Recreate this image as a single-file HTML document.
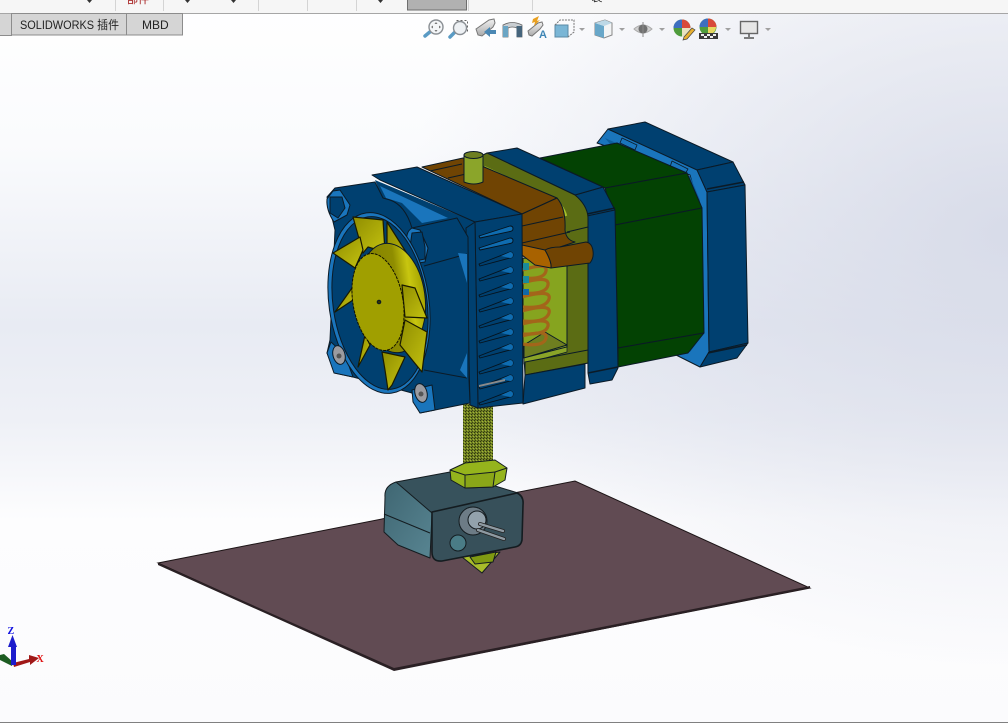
<!DOCTYPE html>
<html><head><meta charset="utf-8"><style>
html,body{margin:0;padding:0;width:1008px;height:723px;overflow:hidden;background:#fff}
svg{position:absolute;left:0;top:0}
</style></head><body>
<svg width="1008" height="723" viewBox="0 0 1008 723" xmlns="http://www.w3.org/2000/svg">
<defs>
<linearGradient id="bgv" x1="0" y1="0" x2="0" y2="1"><stop offset="0" stop-color="#fff"/><stop offset=".2" stop-color="#fafbfd"/><stop offset=".45" stop-color="#e8ebf3"/><stop offset=".58" stop-color="#eef0f6"/><stop offset=".72" stop-color="#fdfdfe"/><stop offset="1" stop-color="#fbfbfd"/></linearGradient>
<radialGradient id="bgr" cx="1" cy=".32" r=".6"><stop offset="0" stop-color="#d5d9e7" stop-opacity=".9"/><stop offset="1" stop-color="#d5d9e7" stop-opacity="0"/></radialGradient>
<linearGradient id="hub" x1="0" y1="0" x2="1" y2="0"><stop offset="0" stop-color="#7f7d00"/><stop offset=".6" stop-color="#8f8d00"/><stop offset=".8" stop-color="#c8c610"/><stop offset="1" stop-color="#a5a300"/></linearGradient>
<linearGradient id="bld" x1="0" y1="0" x2="1" y2="1"><stop offset="0" stop-color="#8f8d00"/><stop offset="1" stop-color="#c4c210"/></linearGradient>
<linearGradient id="side" x1="0" y1="0" x2="1" y2="1"><stop offset="0" stop-color="#3f6672"/><stop offset="1" stop-color="#588592"/></linearGradient>
<linearGradient id="scope" x1="0" y1="0" x2="0" y2="1"><stop offset="0" stop-color="#f2f2f2"/><stop offset="1" stop-color="#aaa"/></linearGradient>
<pattern id="thr" width="3" height="3" patternUnits="userSpaceOnUse"><rect width="3" height="3" fill="#6f7f22"/><rect x="0" y="0" width="1" height="1" fill="#2c3410"/><rect x="2" y="1" width="1" height="1" fill="#a2b43a"/><rect x="1" y="2" width="1" height="1" fill="#3a4414"/></pattern>
</defs>
<rect width="1008" height="723" fill="url(#bgv)"/>
<rect width="1008" height="723" fill="url(#bgr)"/>

<!-- toolbar -->
<rect width="1008" height="13" fill="#f6f6f6"/>
<rect y="13" width="1008" height="1" fill="#a6a6a6"/>
<g fill="#d4d4d4"><rect x="115" width="1" height="11"/><rect x="163" width="1" height="11"/><rect x="258" width="1" height="11"/><rect x="307" width="1" height="11"/><rect x="356" width="1" height="11"/><rect x="468" width="1" height="11"/><rect x="532" width="1" height="11"/></g>
<rect x="407.500" y="-2" width="59" height="12" fill="#b1b1b1" stroke="#6f6f6f"/>
<g fill="#333"><path d="M87 0h5l-2.500 3z"/><path d="M185 0h5l-2.500 3z"/><path d="M231 0h5l-2.500 3z"/><path d="M378 0h5l-2.500 3z"/></g>
<text x="127" y="3" font-family="'Liberation Sans','Noto Sans CJK SC',sans-serif" font-size="11" fill="#a01010">部件</text>
<text x="597" y="1" font-family="'Liberation Sans','Noto Sans CJK SC',sans-serif" font-size="11" fill="#222" text-anchor="middle">装</text>

<!-- tabs -->
<rect x="0" y="14" width="11" height="21" fill="#d5d5d5"/>
<rect x="11.500" y="13.500" width="115" height="21.500" fill="#d5d5d5" stroke="#8c8c8c"/>
<rect x="126.500" y="13.500" width="56" height="21.500" fill="#d5d5d5" stroke="#8c8c8c"/>
<rect x="0" y="35" width="12" height="1" fill="#8c8c8c"/>
<text x="20" y="29" textLength="99" lengthAdjust="spacingAndGlyphs" font-family="'Liberation Sans','Noto Sans CJK SC',sans-serif" font-size="12" fill="#222">SOLIDWORKS 插件</text>
<text x="142" y="29" font-family="'Liberation Sans',sans-serif" font-size="12" fill="#222">MBD</text>

<!-- heads-up icons -->
<g>
<path d="M425 36l6-5" stroke="#5a9bc4" stroke-width="3.500" stroke-linecap="round"/><circle cx="436" cy="27" r="7" fill="#f4f6f8" stroke="#8a8f94" stroke-width="1.400"/><path d="M436 22l1.500 2h-3zM436 32l1.500-2h-3zM431 27l2-1.500v3zM441 27l-2-1.500v3z" fill="#777"/>
<path d="M450 37l6-6" stroke="#5a9bc4" stroke-width="3.500" stroke-linecap="round"/><rect x="456.500" y="20.500" width="11" height="11" fill="none" stroke="#666" stroke-dasharray="2 2"/><circle cx="460" cy="28" r="6.500" fill="#eef1f4" stroke="#8a8f94" stroke-width="1.400"/>
<path d="M476 29l13-9 5-1 1 4-2 4-11 9-4-1z" fill="url(#scope)" stroke="#777"/><path d="M484 32l6-5v3h6v4h-6v3z" fill="#4b88b4"/>
<path d="M503 25q9-5 19 0v12h-5v-9q-5-2-9 0v9h-5z" fill="#c9ced2" stroke="#666" stroke-width=".8"/><path d="M503 26h5v11h-5z" fill="#6aa5c4"/><path d="M516.500 26h5.500v11h-5.500z" fill="#46657c"/>
<path d="M528 31l10-8 4-1 1 3-3 4-8 7-3-1z" fill="url(#scope)" stroke="#777"/><path d="M533 19l6-3-2 5 3-1-6 6 1-4-3 1z" fill="#e9a020"/><text x="539" y="38" font-family="'Liberation Sans',sans-serif" font-weight="bold" font-size="11" fill="#3f86b5">A</text>
<path d="M555 25h13v12h-13z" fill="#7ab6d6" stroke="#5a8ba6"/><path d="M555 25l5-5h14v12l-6 5" fill="none" stroke="#777" stroke-dasharray="2 1"/>
<path d="M579 28h6l-3 3z" fill="#a0a0a0"/>
<path d="M595 23l10-3 7 3v12l-8 3-9-3z" fill="#f2f4f5" stroke="#888"/><path d="M595 23l9 3v12l-9-3z" fill="#68a7c9"/><path d="M595 23l10-3 7 3-8 3z" fill="#bcd8e6"/>
<path d="M619 28h6l-3 3z" fill="#a0a0a0"/>
<path d="M634 29q9-8 18 0q-9 8-18 0z" fill="#d0d0d0" stroke="#aaa"/><circle cx="643" cy="29" r="4.500" fill="#707070"/><path d="M643 22v15" stroke="#8a8a8a"/>
<path d="M659 28h6l-3 3z" fill="#a0a0a0"/>
<circle cx="682" cy="28" r="8.500" fill="#4f9c3c"/><path d="M682 19.500a8.500 8.500 0 0 1 8.500 8.500h-8.500z" fill="#d84a3a"/><path d="M673.500 28a8.500 8.500 0 0 1 8.500-8.500v8.500z" fill="#3d6fc0"/><path d="M682 28h8.500a8.500 8.500 0 0 1-8.500 8.500z" fill="#e8e2c0"/><path d="M684 37l8-9 3 2-8 9-4 1z" fill="#e8b030" stroke="#444" stroke-width=".7"/>
<circle cx="708" cy="27" r="8.500" fill="#4f9c3c"/><path d="M708 18.500a8.500 8.500 0 0 1 8.500 8.500h-8.500z" fill="#d84a3a"/><path d="M699.500 27a8.500 8.500 0 0 1 8.500-8.500v8.500z" fill="#3d6fc0"/><path d="M708 27h8a8 8 0 0 1-3 6h-5z" fill="#e8d860"/><rect x="699" y="33" width="19" height="6" fill="#3a3a3a"/><path d="M701 34h3v2h-3zM707 34h3v2h-3zM713 34h3v2h-3zM704 36h3v2h-3zM710 36h3v2h-3z" fill="#eee"/>
<path d="M725 28h6l-3 3z" fill="#a0a0a0"/>
<rect x="740.500" y="21.500" width="17" height="12" fill="#e6e6e6" stroke="#666" stroke-width="1.400"/><path d="M749 34v3M744 38h10" stroke="#555" stroke-width="1.500"/>
<path d="M765 28h6l-3 3z" fill="#a0a0a0"/>
</g>

<!-- plate -->
<path d="M158 563L575 481L810 588L394 670Z" fill="#614b53" stroke="#1c1416" stroke-width="1"/>
<path d="M158 563L394 668L810 586L810 588L394 671L158 565Z" fill="#2a2024"/>

<!-- rod -->
<rect x="463" y="404" width="30" height="66" fill="url(#thr)"/>

<g stroke="#0b1a26" stroke-width="1" stroke-linejoin="round">
<!-- rear cap rim -->
<path d="M597 143L608 129L697 169L707 192L709 352L700 367L676 355L690 340L700 210L690 175Z" fill="#1a75bc"/>
<path d="M605 138L690 176L700 200L699 340L690 352L660 345L640 180Z" fill="#0d5f9e" stroke="none"/>
<path d="M622 138L637 145L635 150L620 143ZM672 161L688 169L685 174L670 167Z" fill="#1a75bc" stroke-width=".8"/>
<!-- rear cap faces -->
<path d="M608 129L645 122L733 162L697 170Z" fill="#004070"/>
<path d="M697 170L733 162L745 185L707 192Z" fill="#004070"/>
<path d="M707 192L745 185L748 343L709 352Z" fill="#004070"/>
<path d="M709 352L748 343L737 358L700 367Z" fill="#004070"/>
<path d="M707 189L744 182M708 353L747 345" stroke-width="1.500" fill="none"/>
<!-- motor -->
<path d="M540 158L617 143L687 173L605 188Z" fill="#034203"/>
<path d="M605 188L687 173L702 208L615 225Z" fill="#034203"/>
<path d="M615 225L702 208L704 333L618 348Z" fill="#034203"/>
<path d="M618 348L704 333L688 353L618 367Z" fill="#034203"/>
<!-- mount blue -->
<path d="M575 195L603 187L615 210L588 216Z" fill="#004070"/>
<path d="M487 153L517 148L603 187L575 195Z" fill="#004070"/>
<path d="M587 216L615 210L618 368L612 380L590 384L588 373Z" fill="#004070"/>
<path d="M587 214L615 208M588 373L618 367" fill="none" stroke-width="1.500"/>
<!-- olive frame -->
<path d="M483 155L487 153L575 195Q587 205 588 217L588 363L525 375L523 340L567 340L567 262L550 268L553 205L483 173Z" fill="#5b6c14"/>
<path d="M484 167L553 199Q563 205 566 216" fill="none" stroke="#a6c22a" stroke-width="2.500"/>
<path d="M567 232L588 227" fill="none"/>
<!-- window -->
<path d="M523 258L567 262L567 347L523 358Z" fill="#86a41f"/>
<path d="M524 345L545 332L567 345L524 358Z" fill="#6e7e20"/>
<path d="M524 358L567 347V352L524 364Z" fill="#8aa428" stroke-width=".7"/>
<path d="M525 362L588 350L588 363L525 375Z" fill="#5b6c14"/>
<path d="M525 375L585 364L585 388L523 404Z" fill="#004070"/>
<!-- spring -->
<g fill="none" stroke="#a3651a" stroke-width="3.200">
<path d="M522 270q26-8 24 1t-24 7"/><path d="M522 283q28-8 26 2t-26 8"/><path d="M522 297q30-8 27 2t-27 8"/><path d="M522 311q30-8 27 2t-27 8"/><path d="M522 324q28-7 26 2t-26 8"/><path d="M522 336q26-7 24 2t-24 6"/>
</g>
<rect x="523" y="263" width="6" height="7" fill="#1a8a9a" stroke="none"/><rect x="523" y="276" width="6" height="7" fill="#1a8a9a" stroke="none"/><rect x="523" y="289" width="6" height="6" fill="#1068a8" stroke="none"/>
<!-- brown bracket -->
<path d="M422 167L463 158L557 198L522 214Z" fill="#704403"/>
<path d="M430 171L462 164M448 178L466 174" fill="none"/>
<path d="M522 214L557 198Q566 208 565 230Q566 240 575 242L560 247Q548 250 548 262L522 256Z" fill="#704403"/>
<path d="M522 226L563 217M522 243L570 232" fill="none"/>
<path d="M522 245L545 250Q552 262 551 268L535 265L522 255Z" fill="#a86200"/>
<path d="M545 250Q552 262 551 268L590 263Q594 258 593 251Q592 243 586 242L560 247Q550 247 545 250Z" fill="#704403"/>
<!-- post -->
<path d="M464 155h19v27q-9 4-19 0z" fill="#8ba52a"/>
<ellipse cx="473.500" cy="155" rx="9.500" ry="3.500" fill="#6d7f22"/>
<!-- fill behind housing top -->
<path d="M375 180L475 222L470 240L412 240L385 205Z" fill="#004070" stroke="none"/>
<!-- heat sink top -->
<path d="M372 175L417 167L522 214L475 222L380 180Z" fill="#004070"/>
<path d="M380 186L386 198L402 203L422 223L448 218Z" fill="#1a75bc" stroke="none"/>
<!-- heat sink front -->
<path d="M475 222L522 214L523 403L478 408Z" fill="#004070"/>
<path d="M466 228L475 222L478 408L470 405Z" fill="#004070"/>
<g fill="#004070" stroke="#05121c" stroke-width=".9">
<path d="M479 236L510 226q3 0 3 2.500t-3 3L480 238Z" fill="#0f6cb0"/>
<path d="M479 248L510 238q3 0 3 2.500t-3 3L480 250Z" fill="#0f6cb0"/>
<path d="M479 264L510 252q3 0 3 3t-3 3L480 266Z"/>
<path d="M479 279L510 267q3 0 3 3t-3 3L480 281Z"/>
<path d="M479 295L510 283q3 0 3 3t-3 3L480 297Z"/>
<path d="M479 310L510 298q3 0 3 3t-3 3L480 312Z"/>
<path d="M479 326L510 314q3 0 3 3t-3 3L480 328Z"/>
<path d="M479 341L510 329q3 0 3 3t-3 3L480 343Z"/>
<path d="M479 356L510 344q3 0 3 3t-3 3L480 358Z"/>
<path d="M479 372L510 360q3 0 3 3t-3 3L480 374Z"/>
<path d="M479 387L510 375q3 0 3 3t-3 3L480 389Z"/>
<path d="M479 403L510 391q3 0 3 3t-3 3L480 405Z"/>
</g>
<g fill="#0f6cb0" stroke="none">
<path d="M501 256l9-4q3 0 3 3t-3 3z"/><path d="M501 271l9-4q3 0 3 3t-3 3z"/><path d="M501 287l9-4q3 0 3 3t-3 3z"/><path d="M501 302l9-4q3 0 3 3t-3 3z"/><path d="M501 318l9-4q3 0 3 3t-3 3z"/><path d="M501 333l9-4q3 0 3 3t-3 3z"/><path d="M501 348l9-4q3 0 3 3t-3 3z"/><path d="M501 364l9-4q3 0 3 3t-3 3z"/><path d="M501 379l9-4q3 0 3 3t-3 3z"/><path d="M501 395l9-4q3 0 3 3t-3 3z"/>
</g>
<path d="M479 385L505 379v2L479 387Z" fill="#8a8a8a" stroke="none"/>
<!-- fan housing -->
<path d="M327 197L335 188L375 182L383 198L390 200Q405 205 412 228L457 218L468 237L469 380L470 403L420 413L412 393L353 377L335 373L327 353L330 340L335 230Z" fill="#004070"/>
<path d="M424 266L467 254M424 370L467 378" fill="none"/>
<path d="M458 253L467 283L467 353L460 370L467 378L467 254Z" fill="#1a75bc" stroke="none"/>
<!-- lobes -->
<path d="M333 191L327 199Q326 210 334 222L347 215L350 205L340 190Z" fill="#1a75bc"/>
<path d="M330 197L342 197L345 208L338 218L330 213Z" fill="#004070"/>
<path d="M412 228Q405 232 407 245L412 264L425 262L428 248L420 230Z" fill="#1a75bc"/>
<path d="M412 233L422 232L425 247L425 259L415 261L410 247Z" fill="#004070"/>
<path d="M331 342L327 353L334 373L353 377L345 355Z" fill="#1a75bc"/>
<path d="M412 390L413 402L420 413L435 410L432 385Z" fill="#1a75bc"/>
<!-- fan ring -->
<ellipse cx="379" cy="303" rx="50" ry="91" transform="rotate(-8 379 303)" fill="#1a75bc"/>
<ellipse cx="380" cy="303" rx="47" ry="87" transform="rotate(-8 380 303)" fill="#004070"/>
<!-- blades -->
<g fill="url(#bld)" stroke="#1a1a00" stroke-width="1.200">
<path d="M353 217L383 220L385 252L368 247L363 253Z"/>
<path d="M387 222L413 263L400 285L395 255L387 255Z"/>
<path d="M333 253L360 237L363 250L355 268Z"/>
<path d="M335 312L352 288L353 300Z"/>
<path d="M358 367L365 335L370 345Z"/>
</g>
<!-- hub body -->
<ellipse cx="392" cy="298" rx="33" ry="55" transform="rotate(-8 392 298)" fill="url(#hub)"/>
<g fill="url(#bld)" stroke="#1a1a00" stroke-width="1.200">
<path d="M402 285L415 288L427 318L405 317Z"/>
<path d="M405 320L427 332L422 372L400 345Z"/>
<path d="M382 352L405 357L392 385L388 390L385 370Z"/>
</g>
<ellipse cx="378" cy="302" rx="25" ry="49" transform="rotate(-10 378 302)" fill="#a09f00" stroke-dasharray="3 1" stroke="#101000"/>
<circle cx="379" cy="302" r="1.800" fill="#333300"/>
<!-- bolts -->
<g fill="#9b9ba0"><ellipse cx="339" cy="355" rx="6" ry="9.500" transform="rotate(-15 339 355)"/><ellipse cx="421" cy="393" rx="6" ry="9.500" transform="rotate(-15 421 393)"/></g>
<circle cx="339" cy="356" r="2.500" fill="#555" stroke="none"/><circle cx="421" cy="394" r="2.500" fill="#555" stroke="none"/>
</g>

<!-- hot end -->
<g stroke="#141c20" stroke-width="1" stroke-linejoin="round">
<path d="M462 557L500 552L482 573Z" fill="#a8bc2a"/>
<path d="M470 557L496 552L493 562L475 564Z" fill="#7f9a12"/>
<path d="M396 482L450 472L518 493L430 514L392 498Z" fill="#37525c"/>
<path d="M385 497Q384 486 396 482L432 513L430 558L398 545L384 532Z" fill="url(#side)"/>
<path d="M384 514L430 533" fill="none"/>
<path d="M432 512L517 493Q524 496 523 505L522 540Q521 546 515 547L442 561Q432 562 432 552Z" fill="#37505a" stroke-width="1.600"/>
<path d="M450 470L465 463L495 460L507 468L505 480L493 487L465 488L451 480Z" fill="#95b41c"/>
<path d="M465 475L495 472L493 487L465 488Z" fill="#8aa618"/>
<path d="M450 470L465 475M495 472L507 468" fill="none"/>
<circle cx="473" cy="521" r="14" fill="#6d7c86"/>
<circle cx="477" cy="520" r="9" fill="#93a2ac"/>
<circle cx="458" cy="543" r="8" fill="#4a7c86"/>
<path d="M480 524L503 531" stroke="#222" stroke-width="4" stroke-linecap="round" fill="none"/>
<path d="M480 524L503 531" stroke="#8e9aa2" stroke-width="2.400" stroke-linecap="round" fill="none"/>
<path d="M478 530L504 539" stroke="#222" stroke-width="4" stroke-linecap="round" fill="none"/>
<path d="M478 530L504 539" stroke="#8e9aa2" stroke-width="2.400" stroke-linecap="round" fill="none"/>
</g>

<!-- triad -->
<path d="M0 655l4-1 9 8-1 4-12-6z" fill="#1d5c22"/>
<path d="M13 663L29 659V655L39 658L30 665V662L14 667Z" fill="#a01818"/>
<path d="M11 665V647H8L12.500 635L17 647H16V665Z" fill="#1c1ccc"/>
<text x="7.500" y="634" font-family="'Liberation Serif',serif" font-weight="bold" font-size="10" fill="#1010e0">Z</text>
<text x="36.500" y="662" font-family="'Liberation Serif',serif" font-weight="bold" font-size="10" fill="#e01010">X</text>

<rect y="722" width="1008" height="1" fill="#808080"/>
</svg>
</body></html>
